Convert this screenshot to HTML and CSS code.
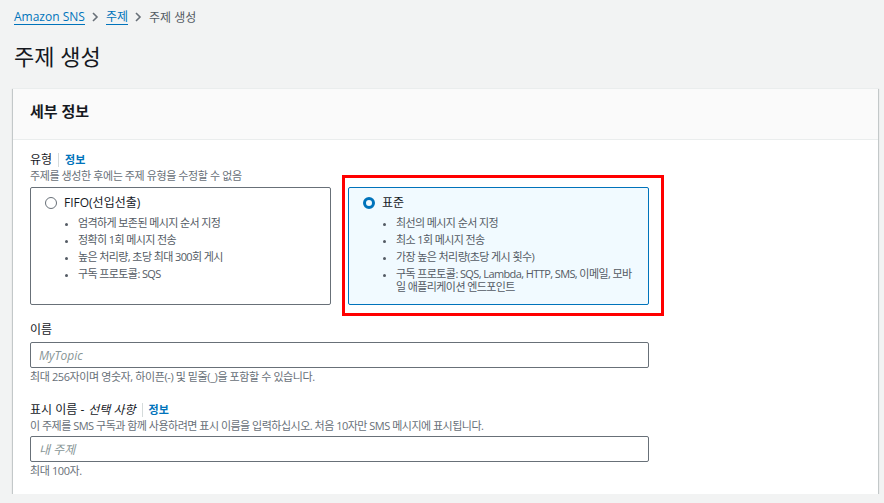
FILE: index.html
```html
<!DOCTYPE html>
<html lang="ko">
<head>
    <meta charset="UTF-8">
    <meta name="viewport" content="width=device-width, initial-scale=1.0">
    <title>주제 생성</title>
    <link rel="stylesheet" href="styles.css">
</head>
<body>
    <nav class="breadcrumb">
        <a href="#">Amazon SNS</a>
        <span class="chevron"><svg width="12" height="12" viewBox="0 0 12 12"><path d="M4 2l4 4-4 4" fill="none" stroke="#687078" stroke-width="1.6"/></svg></span>
        <a href="#">주제</a>
        <span class="chevron"><svg width="12" height="12" viewBox="0 0 12 12"><path d="M4 2l4 4-4 4" fill="none" stroke="#687078" stroke-width="1.6"/></svg></span>
        <span class="current">주제 생성</span>
    </nav>

    <h1>주제 생성</h1>

    <div class="card">
        <div class="card-header">세부 정보</div>
        <div class="card-body">
            <div class="field">
                <div class="label">유형 <span class="sep"></span><a href="#" class="info">정보</a></div>
                <div class="desc">주제를 생성한 후에는 주제 유형을 수정할 수 없음</div>
                <div class="tiles">
                    <div class="tile">
                        <div class="tile-title"><span class="radio"></span>FIFO(선입선출)</div>
                        <ul>
                            <li>엄격하게 보존된 메시지 순서 지정</li>
                            <li>정확히 1회 메시지 전송</li>
                            <li>높은 처리량, 초당 최대 300회 게시</li>
                            <li>구독 프로토콜: SQS</li>
                        </ul>
                    </div>
                    <div class="tile selected">
                        <div class="tile-title"><span class="radio checked"></span>표준</div>
                        <ul>
                            <li>최선의 메시지 순서 지정</li>
                            <li>최소 1회 메시지 전송</li>
                            <li>가장 높은 처리량(초당 게시 횟수)</li>
                            <li>구독 프로토콜: SQS, Lambda, HTTP, SMS, 이메일, 모바일 애플리케이션 엔드포인트</li>
                        </ul>
                        <div class="highlight"></div>
                    </div>
                </div>
            </div>

            <div class="field">
                <div class="label">이름</div>
                <input type="text" placeholder="MyTopic">
                <div class="hint">최대 256자이며 영숫자, 하이픈(-) 및 밑줄(_)을 포함할 수 있습니다.</div>
            </div>

            <div class="field">
                <div class="label">표시 이름 - <i>선택 사항</i> <span class="sep"></span><a href="#" class="info">정보</a></div>
                <div class="desc tight">이 주제를 SMS 구독과 함께 사용하려면 표시 이름을 입력하십시오. 처음 10자만 SMS 메시지에 표시됩니다.</div>
                <input type="text" placeholder="내 주제">
                <div class="hint">최대 100자.</div>
            </div>
        </div>
    </div>
</body>
</html>
```

FILE: styles.css
```css
body {
    font-family: "Open Sans", "Noto Sans CJK KR", sans-serif;
    font-size: 12px;
    background-color: #f2f3f3;
    color: #16191f;
    margin: 0;
    padding: 0 6px 0 13px;
}

a {
    color: #0073bb;
    text-decoration: none;
}

.breadcrumb {
    display: flex;
    align-items: center;
    gap: 4px;
    height: 18px;
    padding: 8px 0 0 1px;
    font-size: 12px;
}

.breadcrumb a {
    border-bottom: 1px solid #0073bb;
    line-height: 14px;
}

.breadcrumb .chevron {
    display: flex;
    margin-right: 1px;
}

.breadcrumb .current {
    color: #545b64;
}

h1 {
    font-size: 22px;
    font-weight: 400;
    line-height: 30px;
    margin: 15px 0 0 1px;
    height: 47px;
}

.card {
    background: #fff;
    box-shadow: 0 1px 1px 0 rgba(0, 28, 36, 0.3), 1px 1px 1px 0 rgba(0, 28, 36, 0.15), -1px 1px 1px 0 rgba(0, 28, 36, 0.15);
    border-top: 1px solid #eaeded;
    width: 865px;
}

.card-header {
    background: #fafafa;
    border-bottom: 1px solid #eaeded;
    height: 50px;
    line-height: 44px;
    padding-left: 17px;
    font-size: 15px;
    font-weight: 700;
}

.card-body {
    padding: 12px 17px 15px;
    width: 619px;
}

.field {
    margin-bottom: 17px;
}

.field:last-child {
    margin-bottom: 0;
}

.label {
    display: flex;
    align-items: center;
    line-height: 16px;
    height: 16px;
}

.label i {
    margin-left: 4px;
}

.sep {
    display: inline-block;
    width: 1px;
    height: 14px;
    background: #d5dbdb;
    margin: 0 6px 0 6px;
}

.info {
    font-weight: 700;
    font-size: 11px;
}

.desc {
    color: #687078;
    line-height: 16px;
    font-size: 11px;
    letter-spacing: -0.4px;
}

.desc.tight {
    line-height: 14px;
    margin-top: 1px;
    letter-spacing: -0.5px;
}

.tiles {
    display: grid;
    grid-template-columns: 1fr 1fr;
    gap: 17px;
    margin-top: 3px;
}

.tile {
    position: relative;
    box-sizing: border-box;
    border: 1px solid #687078;
    border-radius: 2px;
    height: 118px;
    padding: 7px 14px;
}

.tile.selected {
    border-color: #0073bb;
    background: #f1faff;
}

.tile-title {
    display: flex;
    align-items: center;
    gap: 7px;
    line-height: 16px;
}

.radio {
    box-sizing: border-box;
    width: 12px;
    height: 12px;
    border: 1px solid #687078;
    border-radius: 50%;
}

.radio.checked {
    border: 3.5px solid #0073bb;
}

.tile ul {
    margin: 5px 0 0;
    padding-left: 33px;
    color: #545b64;
    font-size: 11px;
    line-height: 13px;
    letter-spacing: -0.6px;
    word-break: break-all;
}

.tile li + li {
    margin-top: 4px;
}

.tile li::marker {
    font-size: 9px;
}

.highlight {
    position: absolute;
    top: -13px;
    left: -7px;
    right: -16px;
    bottom: -12px;
    border: 3px solid #f00;
}

input {
    display: block;
    box-sizing: border-box;
    width: 100%;
    height: 26px;
    margin-top: 4px;
    border: 1px solid #687078;
    border-radius: 2px;
    padding: 0 8px;
    font-family: inherit;
    font-size: 12px;
}

input::placeholder {
    color: #879596;
    font-style: italic;
}

.hint {
    color: #687078;
    font-size: 11px;
    line-height: 16px;
    margin-top: 1px;
    letter-spacing: -0.4px;
}

.field .desc + input {
    margin-top: 3px;
}
```
